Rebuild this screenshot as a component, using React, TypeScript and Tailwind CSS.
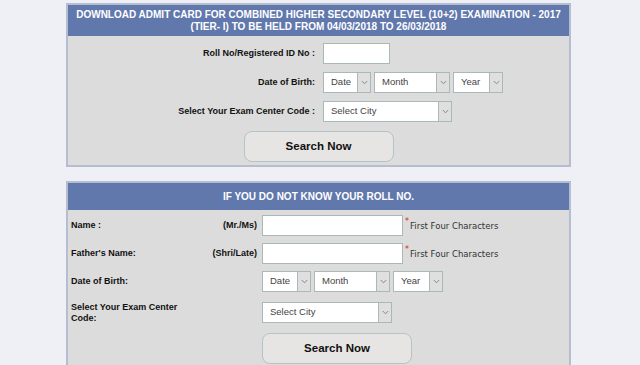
import React from 'react';

const Chevron = () => (
  <svg width="7" height="5" viewBox="0 0 7 5" fill="none">
    <path d="M0.8 1 L3.5 3.8 L6.2 1" stroke="#808080" strokeWidth="0.9" />
  </svg>
);

function FakeSelect({ text, className }: { text: string; className: string }) {
  return (
    <div className={`flex h-[21px] border border-[#a9b9b8] bg-white ${className}`}>
      <div className="flex-1 pl-[7px] flex items-center text-[9.5px] text-[#444]">{text}</div>
      <div className="w-[13px] border-l border-[#a9b9b8] bg-[#dfdfdf] flex items-center justify-center">
        <Chevron />
      </div>
    </div>
  );
}

function SearchButton() {
  return (
    <button className="h-[31px] w-[150px] rounded-[8px] border border-[#b4c3c3] bg-[#e6e5e3] text-[11.5px] font-bold text-[#111]">
      Search Now
    </button>
  );
}

// red star + hint next to name fields
const Req = () => (
  <div className="ml-[2px] flex items-start h-[21px] pt-[3px] font-['DejaVu_Sans',Verdana,sans-serif] text-[8.5px] font-normal text-[#333]">
    <span className="text-[#e02020] text-[8px] leading-[8px] mr-[1px]">*</span>
    <span className="mt-[2px]">First Four Characters</span>
  </div>
);

export default function App() {
  return (
    <div className="w-[640px] h-[365px] overflow-hidden bg-[#eef0f5] pt-[3px] font-['Liberation_Sans',Arial,sans-serif]">
      {/* known roll no */}
      <div className="ml-[66px] w-[505px] border-2 border-[#b7bdd0] bg-[#dcdcdc]">
        <div className="h-[31px] bg-[#6178ad] flex flex-col items-center justify-center text-white text-[10px] font-bold leading-[12px] text-center">
          <div>DOWNLOAD ADMIT CARD FOR COMBINED HIGHER SECONDARY LEVEL (10+2) EXAMINATION - 2017</div>
          <div>(TIER- I) TO BE HELD FROM 04/03/2018 TO 26/03/2018</div>
        </div>
        <div className="pt-[7px] pb-[3px] flex flex-col gap-[8px] text-[9px] font-bold text-[#111]">
          <div className="flex items-center">
            <div className="w-[247px] text-right">Roll No/Registered ID No :</div>
            <div className="ml-[8px] h-[21px] w-[67px] border border-[#a9b9b8] bg-white" />
          </div>
          <div className="flex items-center">
            <div className="w-[247px] text-right">Date of Birth:</div>
            <div className="ml-[8px] flex gap-[3px] font-normal">
              <FakeSelect text="Date" className="w-[48px]" />
              <FakeSelect text="Month" className="w-[76px]" />
              <FakeSelect text="Year" className="w-[50px]" />
            </div>
          </div>
          <div className="flex items-center">
            <div className="w-[247px] text-right">Select Your Exam Center Code :</div>
            <div className="ml-[8px] font-normal">
              <FakeSelect text="Select City" className="w-[129px]" />
            </div>
          </div>
          <div className="flex justify-center mt-[1px]">
            <SearchButton />
          </div>
        </div>
      </div>

      {/* unknown roll no */}
      <div className="mt-[14px] ml-[66px] w-[505px] h-[200px] border-2 border-[#b7bdd0] bg-[#dcdcdc]">
        <div className="h-[27px] bg-[#6178ad] flex items-center justify-center text-white text-[10px] font-bold">
          IF YOU DO NOT KNOW YOUR ROLL NO.
        </div>
        <div className="pl-[3px] pt-[5px] text-[9px] font-bold text-[#111]">
          <div className="flex items-center">
            <div className="w-[130px]">Name :</div>
            <div className="w-[56px] text-right">(Mr./Ms)</div>
            <div className="ml-[5px] h-[21px] w-[141px] border border-[#a9b9b8] bg-white" />
            <Req />
          </div>
          <div className="mt-[7px] flex items-center">
            <div className="w-[130px]">Father's Name:</div>
            <div className="w-[56px] text-right">(Shri/Late)</div>
            <div className="ml-[5px] h-[21px] w-[141px] border border-[#a9b9b8] bg-white" />
            <Req />
          </div>
          <div className="mt-[7px] flex items-center">
            <div className="w-[186px]">Date of Birth:</div>
            <div className="ml-[5px] flex gap-[3px] font-normal">
              <FakeSelect text="Date" className="w-[49px]" />
              <FakeSelect text="Month" className="w-[76px]" />
              <FakeSelect text="Year" className="w-[50px]" />
            </div>
          </div>
          <div className="mt-[10px] flex items-center">
            <div className="w-[186px]">
              <div className="w-[125px] leading-[10.5px]">Select Your Exam Center Code:</div>
            </div>
            <div className="ml-[5px] font-normal">
              <FakeSelect text="Select City" className="w-[130px]" />
            </div>
          </div>
          <div className="mt-[10px] flex">
            <div className="w-[191px]" />
            <SearchButton />
          </div>
        </div>
      </div>
    </div>
  );
}
